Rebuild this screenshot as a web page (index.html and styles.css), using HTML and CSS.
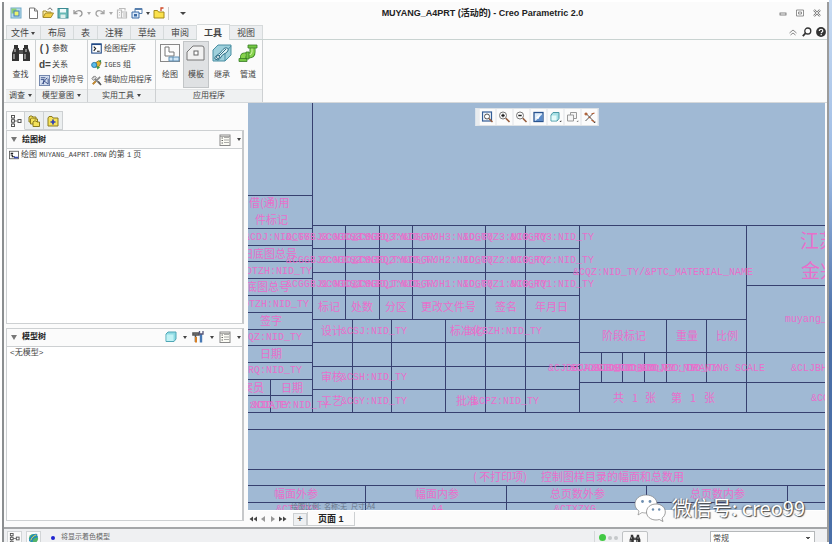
FILE: index.html
```
<!DOCTYPE html>
<html lang="zh-CN">
<head>
<meta charset="utf-8" />
<meta name="viewport" content="width=device-width, initial-scale=1" />
<title>MUYANG_A4PRT (活动的) - Creo Parametric 2.0</title>
<link rel="stylesheet" href="styles.css">
</head>
<body>
<!-- 公用图标 -->
<svg class="defs" width="0" height="0" aria-hidden="true">
  <symbol id="i-bino" viewBox="0 0 20 18">
    <path d="M3 1h4v3h1v2h4V4h1V1h4v3l2 5v8h-7v-7H8v7H1V9l2-5z" fill="#333"/>
    <path d="M4 5v3M15 5v3M3 10v5M14 10v5" stroke="#aaa" stroke-width="1.4"/>
    <path d="M9 6v4M11 6v4" stroke="#777"/>
  </symbol>
  <symbol id="i-list" viewBox="0 0 12 12">
    <rect x="1" y="1" width="10" height="10.5" fill="#fbfbf4" stroke="#888"/>
    <path d="M5 3.5h5M5 6h5M5 8.500h5M1 2.500h10" stroke="#888" stroke-width=".7"/>
    <path d="M2.500 4h1.500M2.500 6.500h1.500M2.500 9h1.500" stroke="#666"/>
  </symbol>
  <symbol id="i-tree" viewBox="0 0 12 12">
    <path d="M3 3v6M3 6h5" stroke="#777" fill="none"/>
    <g fill="#fff" stroke="#555"><rect x="1.500" y=".5" width="3" height="2.500"/><rect x="1.500" y="4.700" width="3" height="2.500"/><rect x="1.500" y="9" width="3" height="2.500"/><rect x="8" y="4.500" width="3" height="3"/></g>
  </symbol>
  <symbol id="i-folder" viewBox="0 0 12 12">
    <path d="M1 3l1-1.500h3L6 3h5v8H1z" fill="#f5e25a" stroke="#8a7a20"/>
  </symbol>
</svg>

<div class="desktop">
<div class="window">
  <header class="titlebar">
    <div class="quick">
      <button class="qb" aria-label="系统"><svg viewBox="0 0 12 12"><rect x="1" y="1" width="10" height="10" fill="#b9dceb" stroke="#6fa9c8"/><path d="M1.500 1.500h5v5h-5z" fill="#8ccf78"/><rect x="4" y="4" width="5" height="5" fill="#eaf36d" stroke="#3c7ac0"/></svg></button>
      <button class="qb gap" aria-label="新建"><svg viewBox="0 0 12 12"><path d="M2.500 1h5l3 3v7.500h-8z" fill="#fff" stroke="#777"/><path d="M7.500 1v3h3" fill="none" stroke="#777"/></svg></button>
      <button class="qb" aria-label="打开"><svg viewBox="0 0 12 12"><path d="M1 10V4h3l1 1h4v2" fill="#fff2a8" stroke="#a48b2e"/><path d="M1 10.500l2.500-4.500h8L9 10.500z" fill="#f1cf45" stroke="#a48b2e"/><path d="M6 2.500c1.500-2 3.500-1.500 4 .8" fill="none" stroke="#555"/></svg></button>
      <button class="qb" aria-label="保存"><svg viewBox="0 0 12 12"><rect x="1" y="1.500" width="10" height="9.500" fill="#66b8b5" stroke="#3c8a92"/><path d="M3 2h6v3.500H3z" fill="#eefafa"/><path d="M3.500 7.500h5V11h-5z" fill="#dff1ee"/></svg></button>
      <button class="qb" aria-label="撤消"><svg viewBox="0 0 12 12"><path d="M2 3v3.500h3.500M2.500 6C5 2.500 10 3 10 6.500c0 1.500-1 2.500-2.500 3" fill="none" stroke="#9a9a9a" stroke-width="1.300"/></svg></button>
      <span class="car faint"></span>
      <button class="qb" aria-label="重做"><svg viewBox="0 0 12 12"><path d="M10 3v3.500H6.500M9.500 6C7 2.500 2 3 2 6.500 2 8 3 9 4.500 9.500" fill="none" stroke="#a5a5a5" stroke-width="1.300"/></svg></button>
      <span class="car faint"></span>
      <button class="qb" aria-label="重新生成"><svg viewBox="0 0 12 12"><path d="M1.500 3h4v8h-4zM5.500 5h5v6h-5zM3 1.500h6v2" fill="none" stroke="#bbb" stroke-width="1.200"/><path d="M7 7h3M7 9h3M3 5.500h1M3 8h1" stroke="#bbb"/></svg></button>
      <button class="qb" aria-label="窗口"><svg viewBox="0 0 12 12"><path d="M4 1.500h7v5H4z" fill="#fff" stroke="#5980ae"/><path d="M4 1.500h7v1.500H4z" fill="#5980ae"/><path d="M1 5h7v6H1z" fill="#dbe9f8" stroke="#3b6aa5"/><path d="M3 7h3v2.500H3z" fill="#3b6aa5"/></svg></button>
      <span class="car"></span>
      <button class="qb" aria-label="关闭窗口"><svg viewBox="0 0 12 12"><path d="M1 11V3.500h3.500l1 1.500H11v6z" fill="#fbe14c" stroke="#a38a1b"/><path d="M8 4V1h2.500" fill="none" stroke="#d04a28" stroke-width="1.300"/></svg></button>
      <span class="vsep"></span>
      <span class="car over"></span>
    </div>
    <h1 class="title">MUYANG_A4PRT (活动的) - Creo Parametric 2.0</h1>
    <div class="wincontrols">
      <button aria-label="最小化"><svg viewBox="0 0 8 8"><rect x="1" y="4" width="6" height="2" fill="#fff" stroke="#666" stroke-width=".8"/></svg></button>
      <button aria-label="最大化"><svg viewBox="0 0 8 8"><path d="M.5 1h7v6h-7zM2.500 3h3v2h-3z" fill="#fff" stroke="#777" stroke-width=".8"/></svg></button>
      <button aria-label="关闭"><svg viewBox="0 0 8 8"><path d="M1 1l6 6M7 1L1 7" stroke="#777" stroke-width="2.200"/><path d="M1 1l6 6M7 1L1 7" stroke="#fff" stroke-width=".8"/></svg></button>
    </div>
  </header>

  <nav class="tabs">
    <button class="tab file">文件<span class="car"></span></button>
    <button class="tab">布局</button>
    <button class="tab">表</button>
    <button class="tab">注释</button>
    <button class="tab">草绘</button>
    <button class="tab">审阅</button>
    <button class="tab active">工具</button>
    <button class="tab">视图</button>
    <div class="help">
      <button aria-label="折叠"><svg viewBox="0 0 10 10"><path d="M1.500 6L5 3l3.500 3M2.500 8L5 6l2.500 2" fill="none" stroke="#888"/></svg></button>
      <button aria-label="搜索"><svg viewBox="0 0 10 10"><circle cx="5.800" cy="4" r="3" fill="#fff" stroke="#333" stroke-width="1.300"/><path d="M3.600 6.200L.8 9.200" stroke="#333" stroke-width="1.800"/></svg></button>
      <button aria-label="帮助"><svg viewBox="0 0 10 10"><circle cx="5" cy="5" r="4.900" fill="#333"/><path d="M3.300 4c0-2.400 3.500-2.200 3.500-.1C6.800 5 5.200 5 5.200 6.200M5.200 7v1.300" fill="none" stroke="#fff" stroke-width="1.200"/></svg></button>
    </div>
  </nav>

  <section class="ribbon">
    <div class="group">
      <div class="gbody">
        <button class="big"><svg viewBox="0 0 20 18"><use href="#i-bino"/></svg>查找</button>
      </div>
      <button class="glabel">调查<span class="car"></span></button>
    </div>
    <div class="group">
      <div class="gbody list">
        <button><span class="sym">( )</span>参数</button>
        <button><span class="sym">d=</span>关系</button>
        <button><svg viewBox="0 0 12 12"><rect x=".5" y=".5" width="11" height="11" fill="#d5dff0" stroke="#6a7fa8"/><path d="M2 3h5M2 5h4M3 10l6-7M5 10V6l5 4V4" fill="none" stroke="#334a86"/></svg>切换符号</button>
      </div>
      <button class="glabel">模型意图<span class="car"></span></button>
    </div>
    <div class="group">
      <div class="gbody list">
        <button><svg viewBox="0 0 12 12"><rect x=".8" y="1" width="10.400" height="10" fill="#fff" stroke="#234a86" stroke-width="1.200"/><path d="M1 1.500h10" stroke="#234a86" stroke-width="1.500"/><path d="M3 4l2 2-2 2.500M6.500 9h3" fill="none" stroke="#222" stroke-width="1.300"/></svg>绘图程序</button>
        <button><svg viewBox="0 0 12 12"><path d="M4 5l4-3 3 2-2 4-4 1z" fill="#e5b52f" stroke="#8b7a2a"/><path d="M8 2l3-1v3z" fill="#2f8f55"/><circle cx="3.500" cy="6.500" r="2.800" fill="#5dbbe8" stroke="#2377a8"/><path d="M6 8l4 1-3 2.500z" fill="#3c9c49"/></svg><span><span class="mono">IGES</span> 组</span></button>
        <button><svg viewBox="0 0 12 12"><path d="M2 2l8 8M10 2L2 10" stroke="#888" stroke-width="1.800"/><path d="M1 4l3-3 2 2-3 3z" fill="#ddd" stroke="#777"/><path d="M2 10l3-3" stroke="#c98b2b" stroke-width="2"/><path d="M8 7l3 4" stroke="#555" stroke-width="1.500"/></svg>辅助应用程序</button>
      </div>
      <button class="glabel">实用工具<span class="car"></span></button>
    </div>
    <div class="group">
      <div class="gbody">
        <button class="big"><svg viewBox="0 0 20 18"><rect x=".5" y=".5" width="19" height="17" fill="#fbfbfb" stroke="#888"/><path d="M5 3v9h9V8H9V3z" fill="#fff" stroke="#777"/><path d="M9 13h10v4H9zM13 13v4" fill="#cfe5f5" stroke="#5e8fb5"/></svg>绘图</button>
        <button class="big pressed"><svg viewBox="0 0 20 18"><path d="M1 16V8l6-6h9q2 0 2 2v12z" fill="#f1f1f1" stroke="#777"/><rect x="8" y="7" width="4" height="4" fill="#fff" stroke="#666"/></svg>模板</button>
        <button class="big"><svg viewBox="0 0 20 18"><path d="M1 6l5-5h13v10l-6 6H1z" fill="#9ed0dc" stroke="#4a8fa3"/><path d="M13 17V9l6-7" fill="none" stroke="#4a8fa3"/><path d="M3 15c-1-3 3-4 5-6s4-6 7-5 0 5-3 6-3 5-6 6z" fill="#dff3f6" stroke="#2c6d85"/><path d="M5 14l9-9" stroke="#2c6d85"/><circle cx="6" cy="13" r="1.500" fill="#fff" stroke="#2c6d85"/></svg>继承</button>
        <button class="big"><svg viewBox="0 0 20 18"><path d="M14.500 3v5q0 3.500-4 3.500H7q-2 0-2 2V17" fill="none" stroke="#3c8527" stroke-width="6"/><path d="M14.500 3v5q0 3.500-4 3.500H7q-2 0-2 2V17" fill="none" stroke="#86d34c" stroke-width="4.400"/><path d="M14 4v4q0 3-4 3H7" fill="none" stroke="#d3f4ab"/><path d="M10 1h9v3h-9zM1 14.500h8v3H1zM8 8h3v7H8z" fill="#74c843" stroke="#377b26" stroke-width=".8"/></svg>管道</button>
      </div>
      <div class="glabel">应用程序</div>
    </div>
  </section>

  <div class="work">
    <aside class="side">
      <div class="sidetabs">
        <button class="on" aria-label="模型树"><svg viewBox="0 0 12 12"><use href="#i-tree"/></svg></button>
        <button aria-label="文件夹浏览器"><svg viewBox="0 0 12 12"><path d="M1 2l1-1h2l1 1h3v5H1z" fill="#f5e25a" stroke="#8a7a20"/><path d="M2.500 4l1-1h2l1 1h3v5h-7z" fill="#f5e25a" stroke="#8a7a20"/><path d="M5 7l1-1h2l1 1h2.500v4.500H5z" fill="#f5e25a" stroke="#8a7a20"/></svg></button>
        <button aria-label="收藏夹"><svg viewBox="0 0 12 12"><use href="#i-folder"/><path d="M6 4.500v5M3.500 7h5" stroke="#2c3fb5" stroke-width="1.700"/></svg></button>
      </div>
      <section class="panel">
        <header class="phead">
          <span class="fold"></span><h2>绘图树</h2>
          <button aria-label="设置"><svg viewBox="0 0 12 12"><use href="#i-list"/></svg><span class="car"></span></button>
        </header>
        <ul class="tree">
          <li><svg viewBox="0 0 12 12"><rect x=".5" y="1.500" width="11" height="9" fill="#fff" stroke="#555"/><path d="M2 4h3M2 6h2v2h3" fill="none" stroke="#222" stroke-width="1.300"/><path d="M6 9h5" stroke="#3549b5" stroke-width="1.800"/></svg><span>绘图 <span class="mono">MUYANG_A4PRT.DRW</span> 的第 <span class="mono">1</span> 页</span></li>
        </ul>
      </section>
      <section class="panel">
        <header class="phead">
          <span class="fold"></span><h2>模型树</h2>
          <button aria-label="显示"><svg viewBox="0 0 12 12"><path d="M1 3l2-2h8v7l-2 2.500H1z" fill="#8edbe4" stroke="#4fa6b5"/><path d="M1.500 3.500H8.500v6.500H1.500z" fill="#c1f2f5"/></svg><span class="car"></span></button>
          <button aria-label="工具"><svg viewBox="0 0 12 12"><path d="M1 2h6v2H1zM3.500 4v7" stroke="#555" stroke-width="1.600" fill="#999"/><path d="M4 6v5.500" stroke="#d87f22" stroke-width="2"/><path d="M9 3v8.500" stroke="#4779b5" stroke-width="2.400"/><path d="M7.500 0v3h3.500V0" fill="none" stroke="#557" stroke-width="1.300"/></svg><span class="car"></span></button>
          <button aria-label="设置"><svg viewBox="0 0 12 12"><use href="#i-list"/></svg><span class="car"></span></button>
        </header>
        <p class="empty">&lt;无模型&gt;</p>
      </section>
    </aside>

    <main class="view">
      <div class="canvas">
        <svg class="sheet" role="img" aria-label="标题栏">
          <!-- 表格线 -->
          <g class="ln">
            <path d="M64.500 0V309.500M0 92.500H64M0 125.500H64M0 142.500H64M0 158.500H64M0 175.500H64M0 192.500H64M0 209.500H64M0 226.500H64M0 242.500H64M0 259.500H64M0 276.500H64M0 292.500H64M22.500 276V309"/>
            <path d="M64 122.500H3000M64 145.500H331M64 169.500H331M64 192.500H331M64 216.500H498M64 239.500H331M64 263.500H331M64 286.500H331M0 309.500H3000"/>
            <path d="M97.500 122V216M131.500 122V216M164.500 122V216M237.500 122V309M277.500 122V309M331.500 122V309M104.500 216V309M143.500 216V309M197.500 216V309"/>
            <path d="M498.500 122V309M498 182.500H3000M331 249.500H3000M331 279.500H3000M353.500 249V279M374.500 249V279M396.500 249V279M418.500 216V279M458.500 216V279"/>
            <path d="M0 326.500H3000M0 366.500H3000M0 382.500H3000M0 399.500H3000M117.500 382V407M258.500 382V407M398.500 382V407M539.500 382V407"/>
          </g>

          <!-- 左侧栏 -->
          <g class="zh">
            <text x="1" y="99">借(通)用</text><text x="7" y="116">件标记</text>
            <text x="-6" y="150">旧底图总号</text><text x="-2" y="183">底图总号</text>
            <text x="12" y="217">签字</text><text x="12" y="250">日期</text>
            <text x="-17" y="284">档案员</text><text x="33" y="284">日期</text>
          </g>
          <g class="en end">
            <text x="62" y="134">&amp;CDJ:NID_TY</text><text x="64" y="168">&amp;CDTZH:NID_TY</text>
            <text x="61" y="201">&amp;CDTZH:NID_TY</text><text x="54" y="234">&amp;CQZ:NID_TY</text>
            <text x="54" y="267">&amp;CRQ:NID_TY</text><text x="42" y="302">&amp;CDAY:NID_TY</text>
            <text x="81" y="302">&amp;CDATE:NID_TY</text>
          </g>

          <!-- 更改栏 -->
          <g class="en mid">
            <text x="80" y="134">&amp;CGGBJ3:NID_TY</text><text x="114" y="134">&amp;CGGCS3:NID_TY</text><text x="147" y="134">&amp;CGGFQ3:NID_TY</text><text x="200" y="134">&amp;CGGWJH3:NID_TY</text><text x="257" y="134">&amp;CGGQZ3:NID_TY</text><text x="304" y="134">&amp;CGGRQ3:NID_TY</text>
            <text x="80" y="157">&amp;CGGBJ2:NID_TY</text><text x="114" y="157">&amp;CGGCS2:NID_TY</text><text x="147" y="157">&amp;CGGFQ2:NID_TY</text><text x="200" y="157">&amp;CGGWJH2:NID_TY</text><text x="257" y="157">&amp;CGGQZ2:NID_TY</text><text x="304" y="157">&amp;CGGRQ2:NID_TY</text>
            <text x="80" y="181">&amp;CGGBJ1:NID_TY</text><text x="114" y="181">&amp;CGGCS1:NID_TY</text><text x="147" y="181">&amp;CGGFQ1:NID_TY</text><text x="200" y="181">&amp;CGGWJH1:NID_TY</text><text x="257" y="181">&amp;CGGQZ1:NID_TY</text><text x="304" y="181">&amp;CGGRQ1:NID_TY</text>
          </g>
          <g class="zh">
            <text x="70" y="203">标记</text><text x="103" y="203">处数</text><text x="137" y="203">分区</text><text x="173" y="203">更改文件号</text><text x="247" y="203">签名</text><text x="287" y="203">年月日</text>
            <text x="73" y="227">设计</text><text x="73" y="273">审核</text><text x="73" y="297">工艺</text><text x="202" y="227">标准化</text><text x="208" y="297">批准</text>
          </g>
          <g class="en">
            <text x="93" y="228">&amp;CSJ:NID_TY</text><text x="93" y="274">&amp;CSH:NID_TY</text><text x="93" y="298">&amp;CGY:NID_TY</text><text x="222" y="228">&amp;CBZH:NID_TY</text><text x="225" y="298">&amp;CPZ:NID_TY</text>
          </g>

          <!-- 材料 / 比例 -->
          <g class="zh">
            <text x="354" y="232">阶段标记</text><text x="428" y="232">重量</text><text x="468" y="232">比例</text>
            <text x="365" y="294">共</text><text x="384" y="294">1</text><text x="397" y="294">张</text><text x="423" y="294">第</text><text x="442" y="294">1</text><text x="456" y="294">张</text>
          </g>
          <g class="en mid">
            <text x="415" y="169">&amp;CQZ:NID_TY/&amp;PTC_MATERIAL_NAME</text>
            <text x="342" y="265">&amp;CJDBJA:NID_TY</text><text x="364" y="265">&amp;CJDBJB:NID_TY</text><text x="385" y="265">&amp;CJDBJC:NID_TY</text><text x="407" y="265">&amp;CJDBJD:NID_TY</text><text x="432" y="265">&amp;CDJZL:NID_TY</text><text x="478" y="265">DRAWING SCALE</text>
          </g>
          <g class="en">
            <text x="543" y="265">&amp;CLJBH:NID_TY</text><text x="563" y="295">&amp;CGS:NID_TY</text>
          </g>
          <text class="en" x="537" y="216">muyang_a4prt</text>
          <g class="co"><text x="552" y="136">江苏</text><text x="553" y="166">金兴</text></g>

          <!-- 幅面控制表 -->
          <g class="zh">
            <text x="225" y="373">( 不打印项)</text><text x="293" y="373">控制图样目录的幅面和总数用</text>
            <text x="26" y="390">幅面外参</text><text x="167" y="390">幅面内参</text><text x="302" y="390">总页数外参</text><text x="442" y="390">总页数内参</text>
          </g>
          <g class="en"><text x="28" y="406">&amp;CTXZXS</text><text x="183" y="406">A4</text><text x="306" y="406">&amp;CTXZXG</text></g>
          <g class="note"><text x="43" y="403">绘图比例:</text><text x="76" y="403">名称:无</text><text x="103" y="403">尺寸:A4</text></g>
        </svg>

        <div class="floatbar">
          <button aria-label="重新调整"><svg viewBox="0 0 12 12"><rect x="1" y="1" width="9" height="9" fill="#eef4fb" stroke="#345d96" stroke-width="1.200"/><circle cx="5.500" cy="5.500" r="2.500" fill="#fff" stroke="#555"/><path d="M7.500 7.500l3.500 3.500" stroke="#945a3a" stroke-width="1.500"/></svg></button>
          <button aria-label="放大"><svg viewBox="0 0 12 12"><circle cx="4.500" cy="4.500" r="3.500" fill="#fff" stroke="#777"/><path d="M4.500 2.800v3.400M2.800 4.500h3.400" stroke="#222" stroke-width="1.300"/><path d="M7.300 7.300l3.700 3.700" stroke="#945a3a" stroke-width="1.600"/></svg></button>
          <button aria-label="缩小"><svg viewBox="0 0 12 12"><circle cx="4.500" cy="4.500" r="3.500" fill="#fff" stroke="#777"/><path d="M2.800 4.500h3.400" stroke="#222" stroke-width="1.300"/><path d="M7.300 7.300l3.700 3.700" stroke="#945a3a" stroke-width="1.600"/></svg></button>
          <button aria-label="重画"><svg viewBox="0 0 12 12"><rect x="1.500" y="1.500" width="9" height="9" fill="#dcebfa" stroke="#28538f" stroke-width="1.300"/><path d="M3 10l7-7v7z" fill="#5c8bc9"/><path d="M3 7l5-4-2 5z" fill="#fff"/></svg></button>
          <button aria-label="显示样式"><svg viewBox="0 0 12 12"><path d="M1.500 4l2-2.500h6v6l-2 2.500h-6z" fill="#a6e0e5" stroke="#4998a5"/><path d="M2 4.500h5v5H2z" fill="#e4fafa"/><path d="M10 11h2V9z" fill="#333"/></svg></button>
          <button aria-label="注释显示"><svg viewBox="0 0 12 12"><path d="M1 4h6v6H1zM4 4V1.500h6v6H7" fill="#f5f5f5" stroke="#999"/><path d="M10 11h2V9z" fill="#777"/></svg></button>
          <button aria-label="基准显示"><svg viewBox="0 0 12 12"><path d="M2 10L10 2M2 2l8 8" stroke="#555"/><path d="M1 3h3M2.500 1.500v3M8 9l3 2M8 3l3-1M5 6l2 1" stroke="#b05c32" stroke-width="1.300"/><path d="M10 12h2v-2z" fill="#333"/></svg></button>
        </div>
      </div>
      <footer class="pages">
        <button aria-label="首页"><svg viewBox="0 0 8 8"><path d="M4 1.500v5L.5 4zM8 1.500v5L4.500 4z" fill="#444"/></svg></button>
        <button aria-label="上一页"><svg viewBox="0 0 8 8"><path d="M6 1v6L2 4z" fill="#999"/></svg></button>
        <button aria-label="下一页"><svg viewBox="0 0 8 8"><path d="M2 1v6l4-3z" fill="#999"/></svg></button>
        <button aria-label="末页"><svg viewBox="0 0 8 8"><path d="M0 1.500v5L3.500 4zM4 1.500v5L7.500 4z" fill="#444"/></svg></button>
        <button class="add">+</button>
        <button class="page">页面 1</button>
      </footer>
    </main>
  </div>

  <footer class="status">
    <button class="sb" aria-label="树"><svg viewBox="0 0 12 12"><use href="#i-tree"/></svg></button>
    <button class="sb" aria-label="浏览器"><svg viewBox="0 0 12 12"><circle cx="6" cy="6" r="5" fill="#53b36a"/><path d="M2 9C2 4 6 1 10 2M4 10c0-4 3-6 6.500-6" fill="none" stroke="#1f87c5" stroke-width="1.800"/><path d="M3 8c1-3 3-5 6-6" stroke="#f0d94a" fill="none"/></svg></button>
    <span class="bullet"></span>
    <span class="msg">将显示着色模型</span>
    <span class="lights"><i class="go"></i><i></i><i></i></span>
    <button class="find" aria-label="查找"><svg viewBox="0 0 20 18"><use href="#i-bino"/></svg></button>
    <select class="filter" aria-label="过滤器"><option>常规</option></select>
  </footer>

  <div class="mark">
    <svg viewBox="0 0 32 28">
      <path d="M12 1C5.500 1 1 5 1 10c0 3 1.500 5.300 4 7l-1 4 4-2.500c1.300.4 2.600.5 4 .5 6.500 0 11-4 11-9S18.500 1 12 1z" fill="#fff" stroke="#777" stroke-width=".6"/>
      <path d="M22 10c-5.500 0-9.500 3.500-9.500 8s4 8 9.500 8c1.200 0 2.300-.2 3.300-.5L29 27.500l-1-3.300c2-1.500 3.300-3.700 3.300-6.200 0-4.500-4-8-9.300-8z" fill="#fff" stroke="#777" stroke-width=".7"/>
      <g fill="#6f8fb0"><circle cx="8.500" cy="7.500" r="1.400"/><circle cx="16" cy="7.500" r="1.400"/><circle cx="19" cy="15.500" r="1.200"/><circle cx="25.200" cy="15.500" r="1.200"/></g>
    </svg>
    <span>微信号: creo99</span>
  </div>
</div>
</div>
</body>
</html>
```
FILE: styles.css
```
:root{--ui:"Liberation Sans","Noto Sans CJK SC",sans-serif;--line:#cdd0d2;--pink:#e86fcb;--ink:#444}
*{box-sizing:border-box}
body{margin:0;background:#fff;font-family:var(--ui);font-size:9px;line-height:12px;color:var(--ink)}
button{border:0;background:none;padding:0;margin:0;font:inherit;color:inherit}
h1,h2,p,ul{margin:0;padding:0}
svg{display:block;flex:none}
.defs{position:absolute}

/* 窗口外框 */
.desktop{height:100vh;padding:2px 3px 2px 2px;background:linear-gradient(#c9dcf3,#9dbbe4 30%,#4a6fa8 60%,#4a6fa8) right/3px 100% no-repeat #fff}
.window{position:relative;height:100%;display:flex;flex-direction:column;overflow:hidden;background:#fbfbfb;border-left:2px solid #8b8e90;border-right:2px solid #9b9b9b}

/* 标题栏 */
.titlebar{display:flex;align-items:center;height:22px;flex:none;padding:0 6px}
.quick{display:flex;align-items:center;gap:3px}
.qb,.qb svg{width:12px;height:12px}
.qb.gap{margin-left:2px}
.vsep{width:1px;height:13px;background:#ccc}
.car{display:inline-block;width:0;height:0;border:2px solid transparent;border-top:3px solid #444;border-bottom:0}
.car.faint{border-top-color:#aaa}
.car.over{margin-left:8px;border-width:3px 3px 0}
.title{flex:1;text-align:center;font-size:9px;font-weight:700;color:#222}
.wincontrols{display:flex;gap:9px}
.wincontrols svg{width:8px;height:8px}

/* 选项卡 */
.tabs{display:flex;flex:none;height:16px;padding-left:2px;border-bottom:1px solid #c9d3d1;align-items:flex-end}
.tab{height:14px;padding:0 7px;background:#eceef0;border:1px solid #d6dadb;border-width:1px 1px 0 0;font-size:9px;line-height:12px}
.file{border-left-width:1px;padding:0 5px 0 4px}
.file .car{margin-left:2px;vertical-align:middle}
.active{height:16px;margin-bottom:-1px;background:#fbfbfb;font-weight:700}
.help{margin-left:auto;display:flex;gap:4px;padding:0 1px 2px 0}
.help svg{width:10px;height:10px}

/* 功能区 */
.ribbon{display:flex;flex:none;height:63px;padding-left:2px;border-bottom:1px solid #d5d8da}
.group{display:flex;flex-direction:column;border-right:1px solid var(--line)}
.gbody{flex:1;display:flex;justify-content:center;padding:1px}
.big{display:flex;flex-direction:column;align-items:center;gap:7px;padding:3px 2px 0;width:26px;font-size:8px}
.big svg{width:20px;height:18px}
.pressed{background:#dfe1e3;outline:1px solid #c2c5c7;outline-offset:-1px}
.list{flex-direction:column;justify-content:space-evenly;padding:0 3px}
.list button{display:flex;align-items:center;gap:2px;font-size:8px;height:14px;white-space:nowrap}
.list svg{width:11px;height:11px}
.sym{width:11px;font-size:10px;font-weight:700;white-space:nowrap}
.glabel{height:13px;padding:0 3px;background:#eff1f2;border-top:1px solid #e2e4e5;font-size:8px;line-height:12px;text-align:center;white-space:nowrap}
.glabel .car{margin-left:3px;vertical-align:middle}

/* 工作区 */
.work{flex:1;min-height:0;display:flex;border-bottom:2px solid #a4a6a8}
.side{width:242px;flex:none;display:flex;flex-direction:column;padding:8px 2px 6px 2px}
.sidetabs{display:flex;flex:none}
.sidetabs button{width:19px;height:19px;padding:3px;background:#eceff0;border:1px solid var(--line);border-left:0}
.sidetabs .on{background:#fbfbfb;border-bottom-color:#fbfbfb;border-left:1px solid var(--line)}
.sidetabs svg{width:12px;height:12px}
.panel{flex:1;display:flex;flex-direction:column;border:1px solid var(--line);border-right:2px solid #c6c8ca;background:#fff}
.panel+.panel{margin-top:4px}
.phead{display:flex;align-items:center;gap:5px;height:18px;padding:0 1px 0 4px;background:#fbfbfb;border-bottom:1px solid var(--line)}
.fold{border:3px solid transparent;border-top:5px solid #777;border-bottom:0}
.phead h2{font-size:8px;font-weight:700;flex:1;color:#222}
.phead button{display:flex;align-items:center;gap:6px}
.phead svg{width:12px;height:12px}
.tree{list-style:none}
.tree li{display:flex;align-items:center;gap:2px;height:12px;padding-left:2px;font-size:8px}
.tree svg{width:10px;height:10px}
.mono{font-family:"Liberation Mono",monospace;font-size:7px}
.empty{padding-left:3px;font-size:8px}

/* 图形窗口 */
.view{flex:1;min-width:0;display:flex;flex-direction:column;margin:0 2px}
.canvas{position:relative;flex:1;min-height:0;background:#a0b9d4;overflow:hidden}
.sheet{position:absolute;inset:0;width:100%;height:100%}
.ln{fill:none;stroke:#37406f;stroke-width:1}
.sheet text{fill:var(--pink);dominant-baseline:central}
.zh{font-family:"Noto Sans CJK SC",sans-serif;font-size:11px}
.en{font-family:"Liberation Mono",monospace;font-size:10px}
.co{font-family:"Noto Sans CJK SC",sans-serif;font-size:19px}
.end{text-anchor:end}
.mid{text-anchor:middle}
.note{font-family:"Noto Sans CJK SC",sans-serif;font-size:7px}
.sheet .note text{fill:#68778a}
.floatbar{position:absolute;top:5px;left:50%;transform:translateX(-50%);display:flex;background:#fbfbfb;border:1px solid #dde2e6;border-left:3px solid #e8ecef}
.floatbar button{padding:2px;border-left:1px solid #e1e4e7}
.floatbar svg{width:12px;height:12px}

/* 页面条 */
.pages{display:flex;align-items:center;height:17px;flex:none;padding-left:1px;gap:2px;border-top:1px solid #fff}
.pages svg{width:8px;height:8px}
.add{width:14px;height:13px;margin-left:4px;background:#eef0f2;border:1px solid var(--line);font-weight:700;line-height:10px}
.page{height:14px;margin-left:-2px;padding:0 10px;border:1px solid var(--line);border-top:0;font-weight:700;color:#222}

/* 状态栏 */
.status{display:flex;align-items:flex-start;height:13px;flex:none;padding:2px 12px 0 3px;gap:4px;background:#eff0f2;overflow:hidden}
.sb{padding:1px;background:#fbfbfb;border:1px solid #d2d5d7}
.sb svg{width:11px;height:11px}
.bullet{width:4px;height:4px;margin:5px 2px 0 6px;border-radius:50%;background:#1f24d0}
.msg{flex:1;font-size:7px;color:#666}
.lights{display:flex;align-items:center;gap:2px;height:13px;padding:0 0 0 4px;border-left:1px solid #d5d7d9}
.lights i{width:4px;height:4px;border-radius:50%;background:#c5c8ca}
.lights .go{width:7px;height:7px;background:#42c944}
.find{width:26px;height:16px;padding:2px 6px;border:1px solid #bfc2c4;border-radius:2px;background:#f8f8f8}
.find svg{width:12px;height:11px}
.filter{appearance:none;width:105px;height:16px;margin-left:58px;padding:0 2px;border:1px solid #b5b8ba;border-radius:0;background:conic-gradient(from -45deg at 50% 100%,#555 90deg,transparent 0) right 3px top 5px/6px 3px no-repeat,#fff;font:8px/12px var(--ui);color:var(--ink)}

/* 水印 */
.mark{position:absolute;right:22px;bottom:20px;display:flex;align-items:center;gap:6px;color:#fff;font:20px/28px "Noto Sans CJK SC",sans-serif;text-shadow:1px 1px 1px #444,-1px 0 1px #777}
.mark svg{width:32px;height:28px}
```
